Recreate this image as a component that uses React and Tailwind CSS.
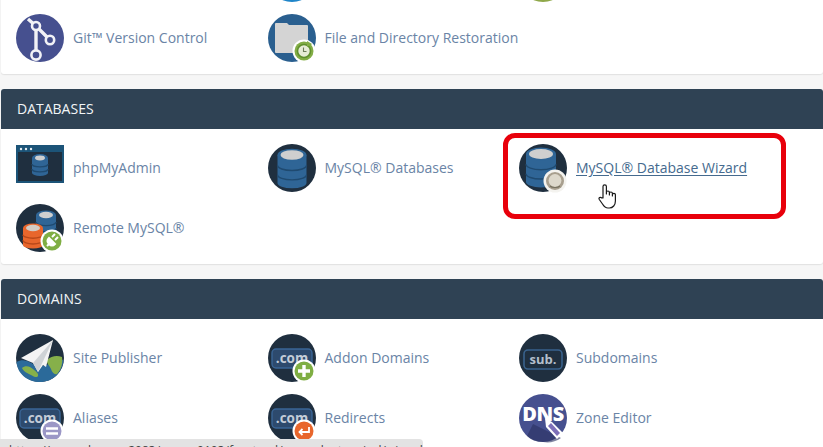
import React from "react";

function Db({ x = 24, y = 11, rx = 14.5, h = 28, top = "#cfcfcf", body = "#2f6596", band = "#1f4a70" }) {
  const ry = rx * 0.36;
  const third = h / 3;
  return (
    <g>
      <path d={`M${x - rx} ${y}v${h}a${rx} ${ry} 0 0 0 ${rx * 2} 0v-${h}z`} fill={body} />
      <path d={`M${x - rx} ${y + third + 1}a${rx} ${ry} 0 0 0 ${rx * 2} 0`} fill="none" stroke={band} strokeWidth="1.4" />
      <path d={`M${x - rx} ${y + 2 * third + 1}a${rx} ${ry} 0 0 0 ${rx * 2} 0`} fill="none" stroke={band} strokeWidth="1.4" />
      <ellipse cx={x} cy={y} rx={rx} ry={ry + 1} fill={body} />
      <ellipse cx={x} cy={y} rx={rx - 3} ry={ry - 0.4} fill={top} />
    </g>
  );
}

function Svg({ children }) {
  return (
    <svg width="48" height="48" viewBox="0 0 48 48" className="shrink-0 overflow-visible">
      {children}
    </svg>
  );
}

function Badge({ fill, children }) {
  return (
    <g>
      <circle cx="36" cy="37" r="11.5" fill="#fff" />
      <circle cx="36" cy="37" r="9.5" fill={fill} />
      {children}
    </g>
  );
}

const dark = "#1f2f3f";

function GitIcon() {
  return (
    <Svg>
      <circle cx="24" cy="24" r="24" fill="#46508f" />
      <path d="M12 5 L20 12 L34 26 M20 12 V41" stroke="#f2f2f6" strokeWidth="3.4" fill="none" />
      <circle cx="20" cy="12" r="4" fill="#46508f" stroke="#f2f2f6" strokeWidth="2.6" />
      <circle cx="34" cy="26" r="4.2" fill="#46508f" stroke="#f2f2f6" strokeWidth="2.6" />
      <circle cx="20" cy="41" r="4.6" fill="#46508f" stroke="#f2f2f6" strokeWidth="2.6" />
    </Svg>
  );
}

function RestoreIcon() {
  return (
    <Svg>
      <circle cx="24" cy="24" r="24" fill="#2a5f8f" />
      <path d="M7 10 a1 1 0 0 1 1-1 h11 l2 2 h18 a1 1 0 0 1 1 1 v26 a1 1 0 0 1-1 1 H8 a1 1 0 0 1-1-1z" fill="#d4d4d4" />
      <Badge fill="#82ad45">
        <circle cx="36" cy="37" r="6.5" fill="#e6ecd6" stroke="#5f8f2d" strokeWidth="1.6" />
        <path d="M35.5 33.5v4h3" stroke="#6d7d5a" strokeWidth="1.1" fill="none" />
        <path d="M39 27l5 3-5 3z" fill="#82ad45" />
      </Badge>
    </Svg>
  );
}

function PmaIcon() {
  return (
    <Svg>
      <rect x="0" y="1" width="48" height="38" fill="#1c5478" />
      <rect x="2" y="8" width="44" height="29" fill="#1f2f3f" />
      <circle cx="5" cy="5" r="1.2" fill="#e8eef2" />
      <circle cx="10" cy="5" r="1.2" fill="#e8eef2" />
      <circle cx="15" cy="5" r="1.2" fill="#e8eef2" />
      <Db x={24} y={14} rx={8} h={15} />
    </Svg>
  );
}

function DbIcon() {
  return (
    <Svg>
      <circle cx="24" cy="24" r="24" fill={dark} />
      <Db />
    </Svg>
  );
}

function WizardIcon() {
  return (
    <Svg>
      <circle cx="24" cy="24" r="24" fill={dark} />
      <Db x={22} y={10} rx={15} h={28} />
      <circle cx="36" cy="37" r="11.5" fill="#f4f3ef" />
      <circle cx="36" cy="37" r="9" fill="#a89f8e" />
      <circle cx="36" cy="36.5" r="6.4" fill="#ddd8cb" />
      <path d="M31 42c2 2 8 2 10 0" stroke="#77715f" strokeWidth="1.2" fill="none" />
    </Svg>
  );
}

function RemoteIcon() {
  return (
    <Svg>
      <circle cx="24" cy="24" r="24" fill={dark} />
      <Db x={30} y={11} rx={10} h={18} />
      <Db x={17} y={24} rx={10} h={17} body="#e8662c" band="#b8481a" top="#d2cbc4" />
      <Badge fill="#7fae43">
        <path d="M31 42l3-3m-1-5 6 6c-2 2-4 2-6 0s-2-4 0-6zm3-1 3-3m0 6 3-3" stroke="#fff" strokeWidth="2" fill="#fff" />
      </Badge>
    </Svg>
  );
}

function PublisherIcon() {
  return (
    <Svg>
      <circle cx="24" cy="24" r="24" fill={dark} />
      <path d="M0.5 28c5-3 10-2 15 1s12 4 17 1 9-5 15-4c-1 13-11 22-23.500 22S1.500 40 0.500 28z" fill="#2b6a9a" />
      <path d="M6 34c3-3 8-2 11 1 2 2 6 4 5 7-1 2-4 1-7-1-4-2-8-4-9-7z" fill="#86b04a" />
      <path d="M31 26c4-4 10-5 15-3 1 6-1 13-5 17-3 1-5-2-6-5s-5-6-4-9z" fill="#86b04a" />
      <path d="M37 6 L5 24 L17 29 L22 38 L27 31 L30 33z" fill="#f4f4f4" />
      <path d="M37 6 L17 29 L22 38z" fill="#cfd3d6" />
    </Svg>
  );
}

function ComIcon({ children }) {
  return (
    <Svg>
      <circle cx="24" cy="24" r="24" fill={dark} />
      <rect x="4" y="15" width="40" height="19" rx="4" fill="#2d4a6d" stroke="#3a6596" strokeWidth="1.4" />
      <text x="24" y="29" textAnchor="middle" fontFamily="'Open Sans', sans-serif" fontWeight="700" fontSize="13.500" fill="#c4cdd8">.com</text>
      {children}
    </Svg>
  );
}

function SubIcon() {
  return (
    <Svg>
      <circle cx="24" cy="24" r="24" fill={dark} />
      <rect x="5" y="16" width="38" height="19" rx="4" fill="#1f2f3f" stroke="#39628d" strokeWidth="1.6" />
      <text x="24" y="30" textAnchor="middle" fontFamily="'Open Sans', sans-serif" fontWeight="700" fontSize="13" fill="#b4bfcc">sub.</text>
    </Svg>
  );
}

function DnsIcon() {
  return (
    <Svg>
      <circle cx="24" cy="24" r="24" fill="#46508f" />
      <path d="M14 30 L42 44 A24 24 0 0 1 24 48 Q14 48 8 42z" fill="#2a3060" opacity="0.6" />
      <text x="24" y="27" textAnchor="middle" fontFamily="'Open Sans', sans-serif" fontWeight="800" fontSize="20" letterSpacing="-0.5" fill="#fff">DNS</text>
      <path d="M26 24 L27 33 L38 45 L44 39 L33 28z" fill="#fff" />
      <path d="M29 32 L38 42 L41 39 L32 29z" fill="#7d6fb8" />
    </Svg>
  );
}

function Tool({ icon, label, link }) {
  return (
    <div className="flex h-[48px] items-center gap-[9px]">
      {icon}
      <span className={link ? "-translate-y-px text-[#456a8e] underline underline-offset-2" : "-translate-y-px text-[#6a84a6]"}>{label}</span>
    </div>
  );
}

function Card({ title, children }) {
  return (
    <section className="mb-[15px] ml-px overflow-hidden rounded-[3px] bg-white shadow-[0_1px_1px_#e2e2e2]">
      {title && (
        <h2 className="flex h-[40px] items-center bg-[#2f4254] pb-[2px] pl-[16px] text-[14px] font-normal text-[#f2f5f7]">{title}</h2>
      )}
      <div className="grid grid-cols-[251.5px_251.5px_1fr] gap-y-[12px] pb-[12px] pl-[15px] pt-[15px]">{children}</div>
    </section>
  );
}

function Hand() {
  return (
    <svg width="20" height="25" viewBox="0 0 20 25" className="absolute left-[598px] top-[184px]">
      <path
        d="M5 14V2.500a1.700 1.700 0 0 1 3.400 0V10V8.500a1.500 1.500 0 0 1 3 0V11V9.500a1.500 1.500 0 0 1 3 0V12V10.800a1.500 1.500 0 0 1 3 0V17c0 4-2.500 7-6 7H10c-3 0-4-1.500-5.500-4L1.300 15.500c-1-1.500 1-3 2.200-1.700z"
        fill="#fff"
        stroke="#1a1a1a"
        strokeWidth="1.200"
        strokeLinejoin="round"
      />
    </svg>
  );
}

export default function App() {
  return (
    <div
      className="relative h-[447px] w-[823px] overflow-hidden bg-[#f6f6f6] text-[14px]"
      style={{ fontFamily: "'Open Sans', sans-serif" }}
    >
      <div className="-mt-[61px]">
        <Card>
          <div className="h-[48px]" />
          <Tool icon={<Svg><circle cx="24" cy="24" r="24" fill="#1f85c9" /></Svg>} label="" />
          <Tool icon={<Svg><circle cx="24" cy="24" r="24" fill="#8fa84a" /></Svg>} label="" />
          <Tool icon={<GitIcon />} label="Git™ Version Control" />
          <Tool icon={<RestoreIcon />} label="File and Directory Restoration" />
        </Card>
        <Card title="DATABASES">
          <Tool icon={<PmaIcon />} label="phpMyAdmin" />
          <Tool icon={<DbIcon />} label="MySQL® Databases" />
          <Tool icon={<WizardIcon />} label="MySQL® Database Wizard" link />
          <Tool icon={<RemoteIcon />} label="Remote MySQL®" />
        </Card>
        <Card title="DOMAINS">
          <Tool icon={<PublisherIcon />} label="Site Publisher" />
          <Tool icon={<ComIcon><Badge fill="#7fae43"><path d="M36 31v12M30 37h12" stroke="#fff" strokeWidth="3.400" /></Badge></ComIcon>} label="Addon Domains" />
          <Tool icon={<SubIcon />} label="Subdomains" />
          <Tool icon={<ComIcon><Badge fill="#9b97c6"><path d="M30 34.500h12M30 39.500h12" stroke="#fff" strokeWidth="2.400" /></Badge></ComIcon>} label="Aliases" />
          <Tool icon={<ComIcon><Badge fill="#e8662c"><path d="M41 33v5h-9m2.500-3-3 3 3 3" stroke="#fff" strokeWidth="1.800" fill="none" /></Badge></ComIcon>} label="Redirects" />
          <Tool icon={<DnsIcon />} label="Zone Editor" />
        </Card>
      </div>
      <div className="absolute left-[503px] top-[133px] h-[86px] w-[283px] rounded-[12px] border-[5px] border-[#e8000b]" />
      <Hand />
      <div className="absolute left-0 top-[439px] h-[8px] w-[423px] overflow-hidden rounded-tr-[4px] bg-[#e3e3e3] pl-[9px] text-[12px] leading-[24px] text-[#444]">
        https://example.com:2083/cpsess0103/frontend/paper_lantern/sql/wizard1.html
      </div>
    </div>
  );
}
